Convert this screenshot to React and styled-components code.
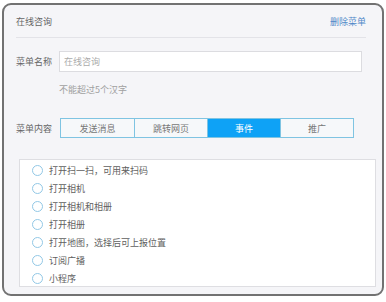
import styled, { createGlobalStyle } from 'styled-components'

const GlobalStyle = createGlobalStyle`
  html, body {
    margin: 0;
    padding: 0;
    background: #ffffff;
  }
  body {
    font-family: "Noto Sans CJK SC", "Noto Sans", sans-serif;
  }
`

const Frame = styled.div`
  box-sizing: border-box;
  width: 382px;
  height: 293px;
  margin: 3px 0 0 2px;
  border: 2px solid #727272;
  border-radius: 9px;
  background: #f5f5f8;
  padding: 0 13px 0 12px;
  display: flex;
  flex-direction: column;
`

const Header = styled.div`
  height: 32px;
  display: flex;
  align-items: center;
  justify-content: space-between;
  border-bottom: 1px solid #e3e3e8;
  margin-right: 3px;
`

const Title = styled.span`
  font-size: 9px;
  color: #666;
`

const DeleteLink = styled.a`
  font-size: 9px;
  color: #5088c8;
  cursor: pointer;
`

const FieldRow = styled.div`
  display: flex;
  align-items: center;
  margin-top: ${(p) => p.$top}px;
`

const Label = styled.span`
  width: 43px;
  flex-shrink: 0;
  font-size: 9px;
  color: #666;
`

const Input = styled.input`
  box-sizing: border-box;
  width: 303px;
  height: 21px;
  border: 1px solid #dcdce0;
  background: #fff;
  padding: 0 4px;
  font-family: inherit;
  font-size: 9px;
  color: #666;
  outline: none;
  &::placeholder {
    color: #ababab;
  }
`

const Hint = styled.div`
  margin: 11px 0 0 43px;
  font-size: 9px;
  color: #a0a0a0;
`

const Tabs = styled.div`
  display: flex;
  border: 1px solid #7fc4e2;
  margin-left: 1px;
`

const Tab = styled.div`
  box-sizing: border-box;
  width: 73px;
  height: 18px;
  display: flex;
  align-items: center;
  justify-content: center;
  font-size: 9px;
  color: ${(p) => (p.$active ? '#fff' : '#777')};
  background: ${(p) => (p.$active ? '#0ea2f6' : '#f6f8fa')};
  & + & {
    border-left: 1px solid #7fc4e2;
  }
`

const List = styled.div`
  box-sizing: border-box;
  width: 357px;
  margin: 21px 0 0 3px;
  height: 128px;
  border: 1px solid #dedee2;
  background: #fff;
  padding-top: 1px;
`

const Option = styled.label`
  height: 18px;
  display: flex;
  align-items: center;
  padding-left: 12px;
  font-size: 9px;
  color: #606060;
`

const Radio = styled.span`
  box-sizing: border-box;
  width: 11px;
  height: 11px;
  border-radius: 50%;
  border: 1px solid #92c8e6;
  background: #fff;
  margin-right: 6px;
`

const tabs = ['发送消息', '跳转网页', '事件', '推广']

const options = [
  '打开扫一扫，可用来扫码',
  '打开相机',
  '打开相机和相册',
  '打开相册',
  '打开地图，选择后可上报位置',
  '订阅广播',
  '小程序',
]

export default function App() {
  return (
    <>
      <GlobalStyle />
      <Frame>
        <Header>
          <Title>在线咨询</Title>
          <DeleteLink>删除菜单</DeleteLink>
        </Header>
        <FieldRow $top={13}>
          <Label>菜单名称</Label>
          <Input placeholder="在线咨询" />
        </FieldRow>
        <Hint>不能超过5个汉字</Hint>
        <FieldRow $top={22}>
          <Label>菜单内容</Label>
          <Tabs>
            {tabs.map((t) => (
              <Tab key={t} $active={t === '事件'}>
                {t}
              </Tab>
            ))}
          </Tabs>
        </FieldRow>
        <List>
          {options.map((o) => (
            <Option key={o}>
              <Radio />
              {o}
            </Option>
          ))}
        </List>
      </Frame>
    </>
  )
}
